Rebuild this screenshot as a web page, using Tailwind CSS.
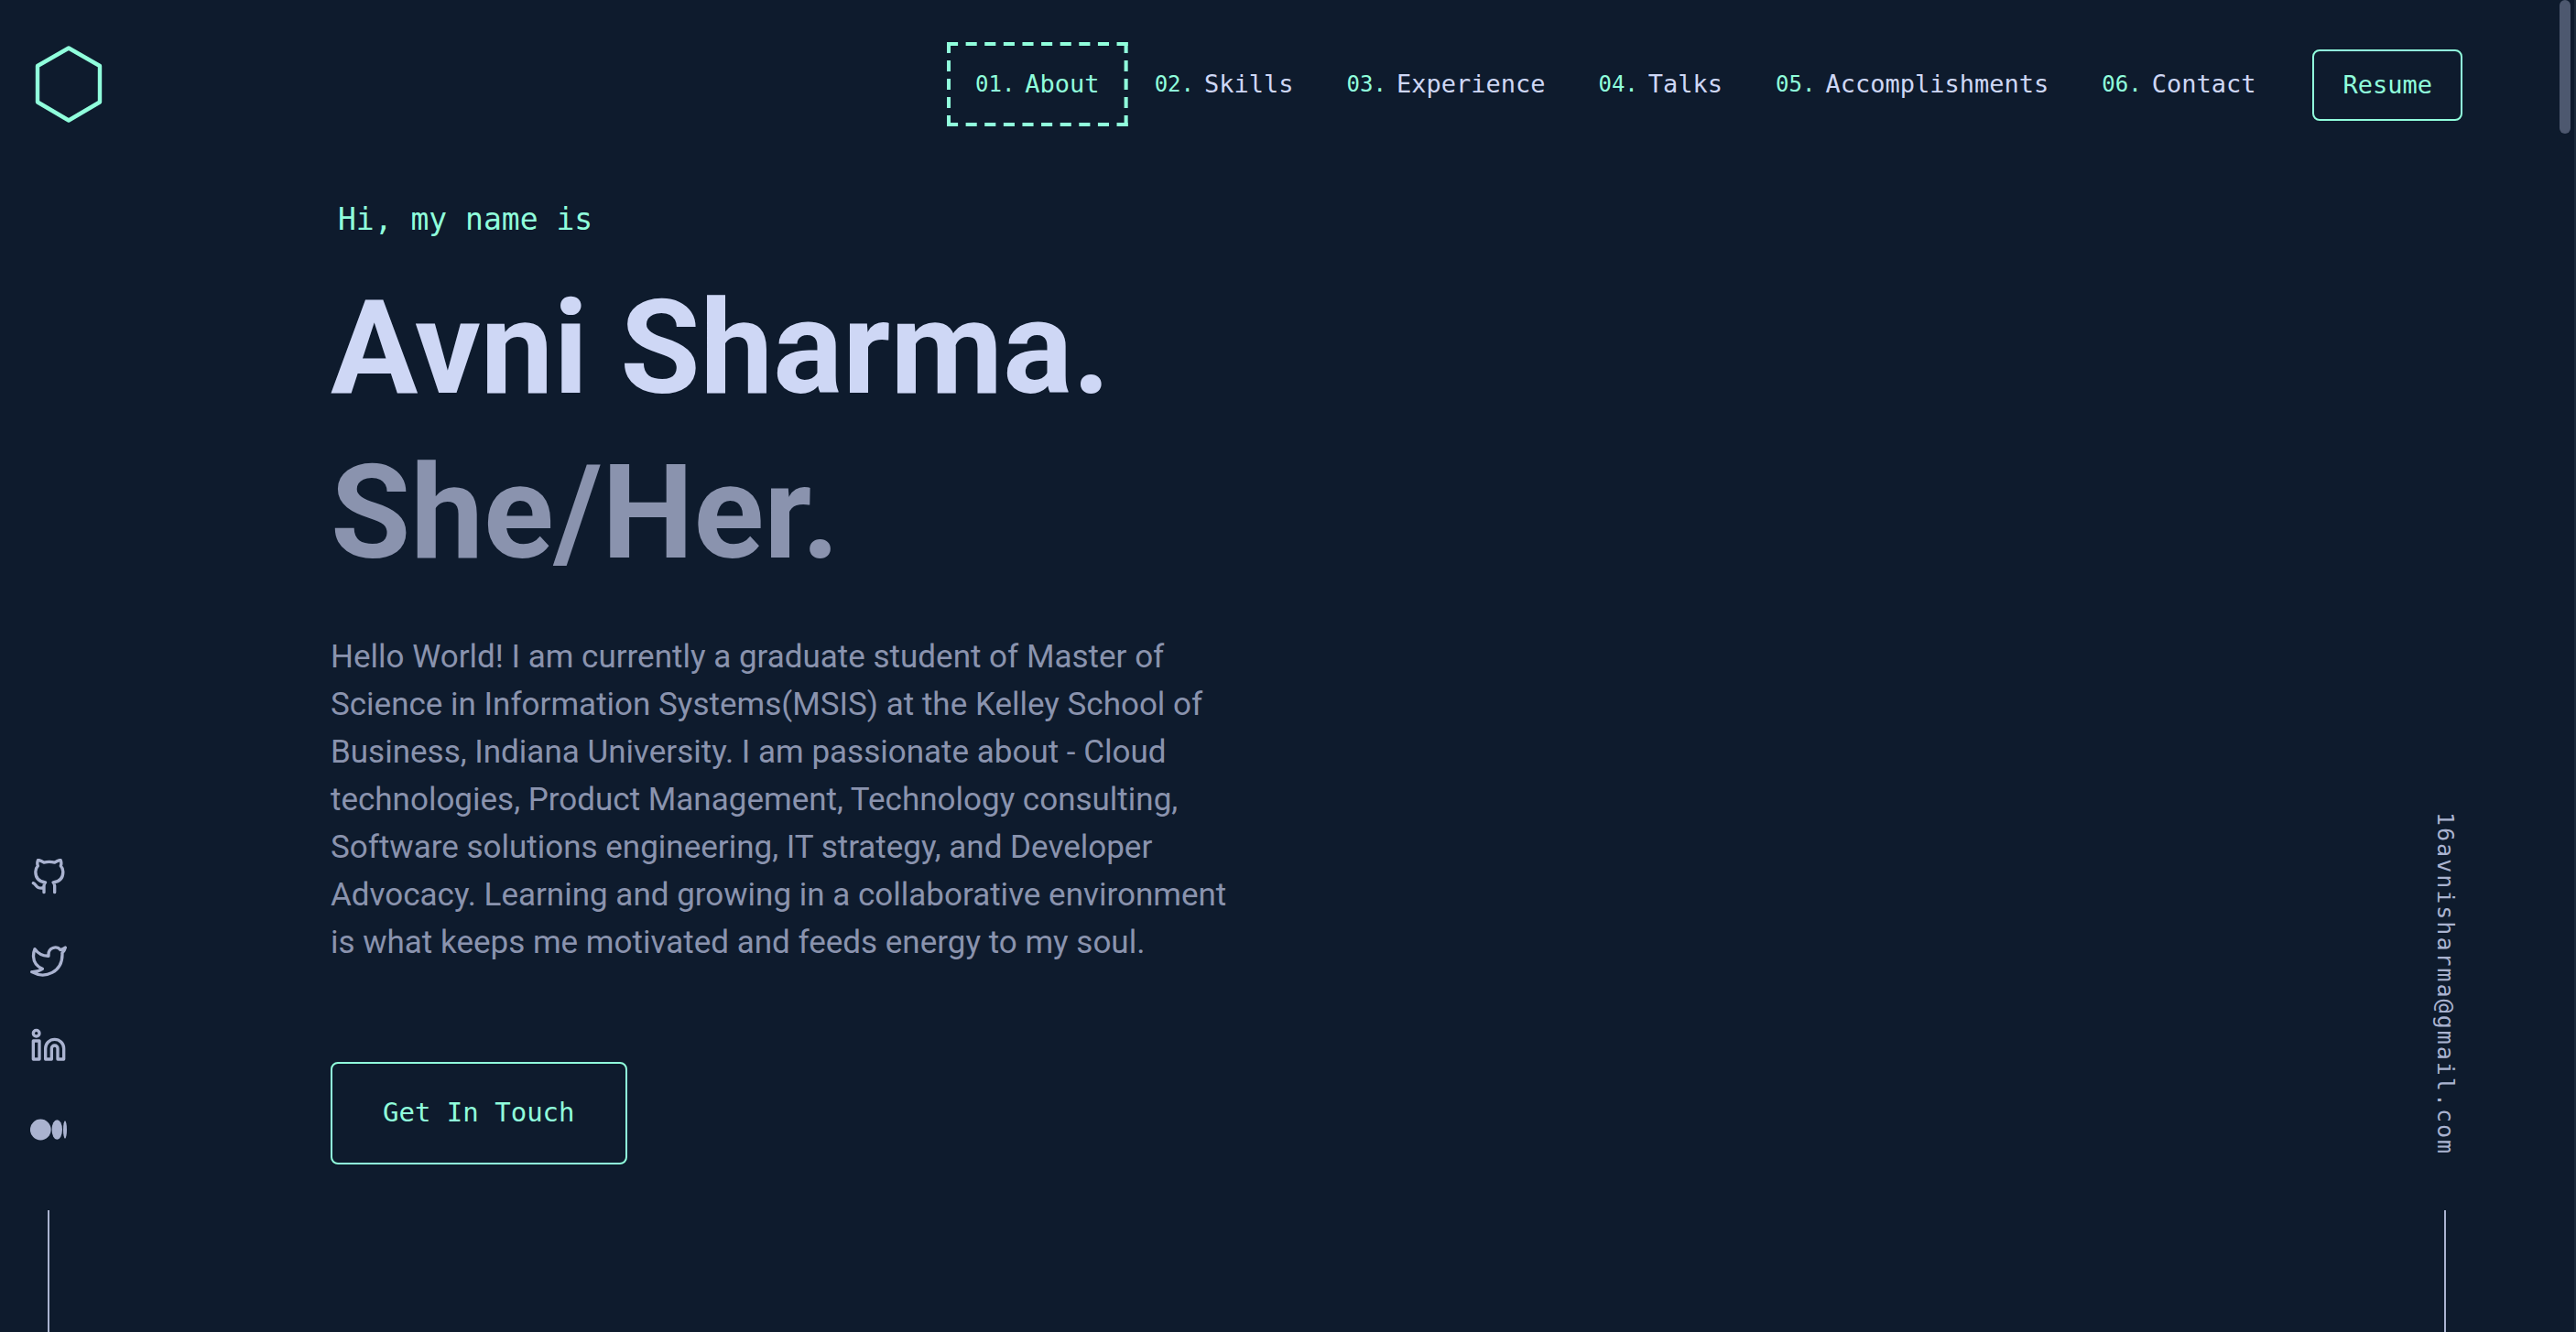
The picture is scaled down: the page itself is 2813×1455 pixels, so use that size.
<!DOCTYPE html>
<html lang="en">
<head>
<meta charset="utf-8">
<meta name="viewport" content="width=device-width, initial-scale=1">
<title>Avni Sharma</title>
<script src="https://cdn.jsdelivr.net/npm/@tailwindcss/browser@4"></script>
</head>
<body class="relative flex min-h-screen flex-col overflow-x-hidden bg-[#0e1b2d] font-['Roboto',sans-serif] text-[#8a93ae]">

<header class="flex items-center justify-between pt-[46px] pr-[124px] pl-[33px] font-['DejaVu_Sans_Mono',monospace] text-[27px] leading-[36px]">
  <a href="#" aria-label="Home" class="text-[#90ffdc]">
    <svg class="h-[92px] w-[84px]" viewBox="0 0 84 92" fill="none" stroke="currentColor" stroke-width="4.400" stroke-linejoin="round"><path d="M42 6.500 76 26V65.500L42 85.500 8 65.500V26Z"/></svg>
  </a>
  <nav class="flex items-center gap-[33px]">
    <ul class="flex items-center text-[#ced7f5]">
      <li><a href="#about" class="relative flex h-[92px] items-center gap-[11px] px-[31px] text-[#90ffdc]">
        <svg class="absolute inset-0 size-full" viewBox="0 0 196 92" preserveAspectRatio="none" fill="none" stroke="currentColor" stroke-width="4" aria-hidden="true"><path stroke-dasharray="12 8.444" d="M0 2H196M0 90H196"/><path stroke-dasharray="12 8" d="M2 0V92M194 0V92"/></svg>
        <span class="text-2xl">01.</span>About</a></li>
      <li><a href="#skills" class="flex items-center gap-[11px] px-[29px]"><span class="text-2xl text-[#90ffdc]">02.</span>Skills</a></li>
      <li><a href="#experience" class="flex items-center gap-[11px] px-[29px]"><span class="text-2xl text-[#90ffdc]">03.</span>Experience</a></li>
      <li><a href="#talks" class="flex items-center gap-[11px] px-[29px]"><span class="text-2xl text-[#90ffdc]">04.</span>Talks</a></li>
      <li><a href="#accomplishments" class="flex items-center gap-[11px] px-[29px]"><span class="text-2xl text-[#90ffdc]">05.</span>Accomplishments</a></li>
      <li><a href="#contact" class="flex items-center gap-[11px] px-[29px]"><span class="text-2xl text-[#90ffdc]">06.</span>Contact</a></li>
    </ul>
    <a href="#resume" class="mt-0.5 flex h-[78px] items-center rounded-lg border-2 border-[#90ffdc] px-[31px] text-[#90ffdc]">Resume</a>
  </nav>
</header>

<main class="flex flex-1 justify-between">
  <aside class="flex flex-col items-center self-end pl-[33px] text-[#aab3d0]" aria-label="Social links">
    <ul class="flex flex-col gap-[52px] pb-[68px]">
      <li><a href="#github" aria-label="GitHub"><svg class="size-10" viewBox="0 0 24 24" fill="none" stroke="currentColor" stroke-width="2" stroke-linecap="round" stroke-linejoin="round"><path d="M9 19c-5 1.500-5-2.500-7-3m14 6v-3.870a3.370 3.370 0 0 0-.940-2.610c3.140-.350 6.440-1.540 6.440-7A5.440 5.440 0 0 0 20 4.770 5.070 5.070 0 0 0 19.910 1S18.730.650 16 2.480a13.380 13.380 0 0 0-7 0C6.270.650 5.090 1 5.090 1A5.070 5.070 0 0 0 5 4.770a5.440 5.440 0 0 0-1.500 3.780c0 5.420 3.300 6.610 6.440 7A3.370 3.370 0 0 0 9 18.130V22"/></svg></a></li>
      <li><a href="#twitter" aria-label="Twitter"><svg class="size-10" viewBox="0 0 24 24" fill="none" stroke="currentColor" stroke-width="2" stroke-linecap="round" stroke-linejoin="round"><path d="M23 3a10.900 10.900 0 0 1-3.140 1.530 4.480 4.480 0 0 0-7.860 3v1A10.660 10.660 0 0 1 3 4s-4 9 5 13a11.640 11.640 0 0 1-7 2c9 5 20 0 20-11.500a4.500 4.500 0 0 0-.080-.830A7.720 7.720 0 0 0 23 3z"/></svg></a></li>
      <li><a href="#linkedin" aria-label="LinkedIn"><svg class="size-10" viewBox="0 0 24 24" fill="none" stroke="currentColor" stroke-width="2" stroke-linecap="round" stroke-linejoin="round"><path d="M16 8a6 6 0 0 1 6 6v7h-4v-7a2 2 0 0 0-4 0v7h-4v-7a6 6 0 0 1 6-6z"/><rect x="2" y="9" width="4" height="12"/><circle cx="4" cy="4" r="2"/></svg></a></li>
      <li><a href="#medium" aria-label="Medium"><svg class="size-10" viewBox="0 0 40 40" fill="currentColor"><circle cx="11.300" cy="20" r="11.400"/><ellipse cx="29.300" cy="20" rx="5.700" ry="10.800"/><ellipse cx="38" cy="20" rx="2" ry="9.700"/></svg></a></li>
    </ul>
    <div class="h-[133px] w-0.5 bg-[#aab3d0]"></div>
  </aside>

  <section id="about" class="flex flex-1 flex-col items-start pt-[78px] pl-[288px]">
    <h1 class="pl-2 font-['DejaVu_Sans_Mono',monospace] text-[33px] leading-[48px] text-[#90ffdc]">Hi, my name is</h1>
    <h2 class="pt-[27px] text-[142px] leading-[180px] font-bold text-[#ced7f5]">Avni Sharma.</h2>
    <h3 class="text-[142px] leading-[180px] font-bold">She/Her.</h3>
    <p class="pt-[41px] text-[35px] leading-[52px]">Hello World! I am currently a graduate student of Master of<br>Science in Information Systems(MSIS) at the Kelley School of<br>Business, Indiana University. I am passionate about - Cloud<br>technologies, Product Management, Technology consulting,<br>Software solutions engineering, IT strategy, and Developer<br>Advocacy. Learning and growing in a collaborative environment<br>is what keeps me motivated and feeds energy to my soul.</p>
    <a href="#contact" class="mt-[104px] flex h-[112px] items-center rounded-lg border-2 border-[#90ffdc] px-[55px] font-['DejaVu_Sans_Mono',monospace] text-[29px] text-[#90ffdc]">Get In Touch</a>
  </section>

  <aside class="flex flex-col items-center self-end pr-[127px] text-[#aab3d0]" aria-label="Email">
    <a href="mailto:16avnisharma@gmail.com" class="pb-[60px] font-['DejaVu_Sans_Mono',monospace] text-[25px] leading-8 tracking-[2px] [writing-mode:vertical-rl]">16avnisharma@gmail.com</a>
    <div class="h-[133px] w-0.5 bg-[#aab3d0]"></div>
  </aside>
</main>

<div class="absolute top-0 right-0 h-full w-0.5 bg-[#1c2b3b]"></div>
<div class="absolute top-0 right-1.5 h-[146px] w-3 rounded-full bg-[#4d586f]"></div>
</body>
</html>
